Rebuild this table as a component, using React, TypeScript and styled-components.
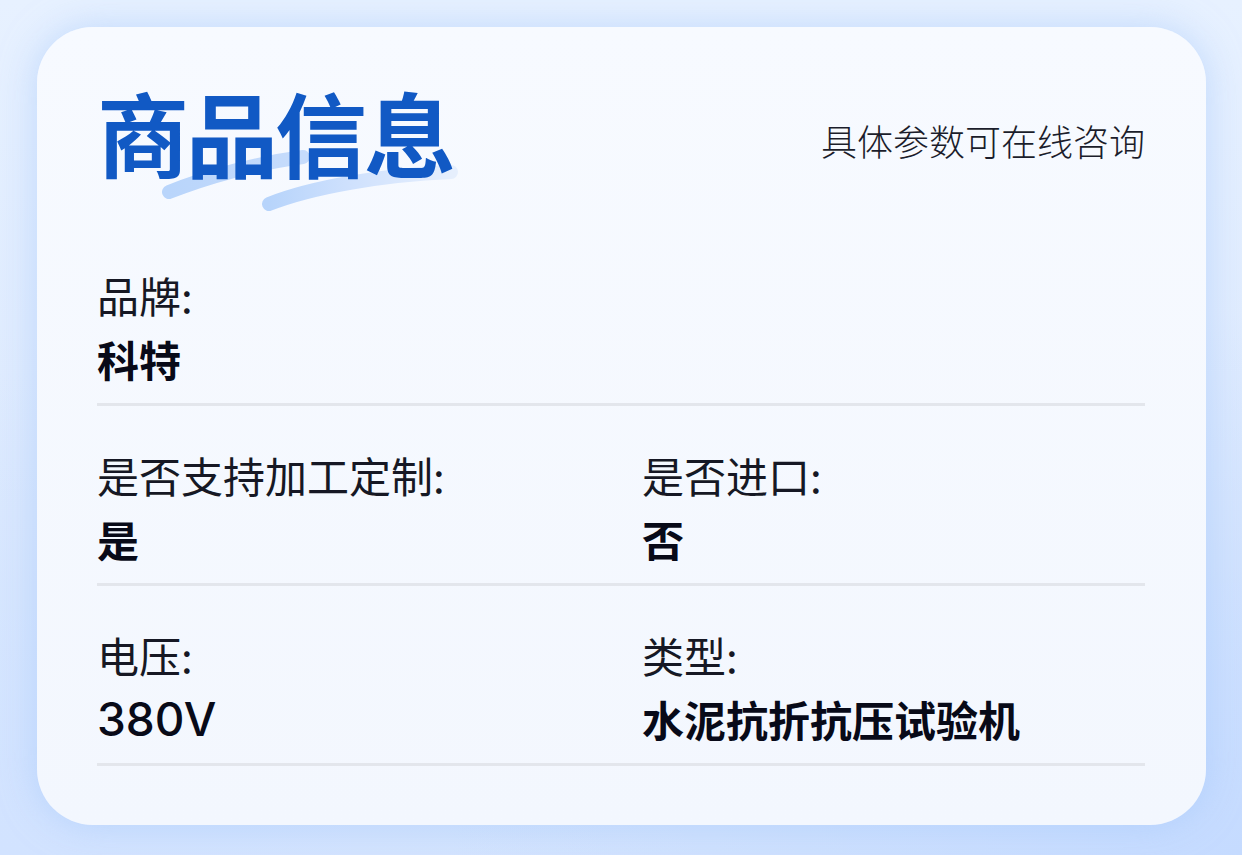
import React from "react";
import styled, { createGlobalStyle } from "styled-components";

const Global = createGlobalStyle`
  html, body { margin: 0; padding: 0; }
  body {
    font-family: "Noto Sans CJK SC", "Noto Sans", sans-serif;
    background: #dbe8fd;
  }
`;

const Page = styled.div`
  box-sizing: border-box;
  width: 1242px;
  height: 855px;
  padding: 27px 36px 30px 37px;
  background:
    radial-gradient(ellipse at 100% 100%, #c5dbff 0%, rgba(197, 219, 255, 0) 45%),
    radial-gradient(ellipse at 0% 100%, #d2e3ff 0%, rgba(210, 227, 255, 0) 40%),
    linear-gradient(180deg, #e7f1ff 0%, #dce9fe 60%, #d4e4fe 100%);
  overflow: hidden;
`;

const Card = styled.div`
  box-sizing: border-box;
  height: 798px;
  border-radius: 56px;
  background: linear-gradient(180deg, #f7faff 0%, #f3f7fe 100%);
  box-shadow: 0 0 36px rgba(160, 196, 250, 0.55);
  padding: 44px 61px 0 60px;
`;

const Header = styled.div`
  display: flex;
  align-items: center;
  justify-content: space-between;
  height: 150px;
  margin-bottom: 50px;
`;

const TitleWrap = styled.div`
  position: relative;
  align-self: flex-start;
`;

const Title = styled.h1`
  position: relative;
  margin: 0;
  font-size: 92px;
  line-height: 120px;
  font-weight: 700;
  color: #1159c4;
  letter-spacing: -3px;
  z-index: 1;
`;

const Brush = styled.svg`
  position: absolute;
  left: 0;
  top: 0;
  width: 400px;
  height: 160px;
  z-index: 0;
`;

const Subtitle = styled.div`
  font-size: 36px;
  font-weight: 300;
  color: #1b1d2b;
  margin-top: -13px;
`;

const Row = styled.div`
  display: grid;
  grid-template-columns: repeat(2, 1fr);
  column-gap: 42px;
  border-bottom: 3px solid #e3e6ec;
  padding-bottom: 20px;
  margin-bottom: 45px;
`;

const Item = styled.div`
  display: flex;
  flex-direction: column;
  gap: 16px;
`;

const Label = styled.div`
  font-size: 42px;
  line-height: 48px;
  font-weight: 400;
  color: #161824;
`;

const Value = styled.div<{ $latin?: boolean }>`
  font-family: ${(p) =>
    p.$latin ? `"Inter", "Noto Sans CJK SC", sans-serif` : `"Noto Sans CJK SC", sans-serif`};
  font-size: ${(p) => (p.$latin ? "46px" : "42px")};
  line-height: 48px;
  font-weight: ${(p) => (p.$latin ? 500 : 700)};
  color: #080a18;
`;

const rows: { label: string; value: string; latin?: boolean }[][] = [
  [{ label: "品牌:", value: "科特" }],
  [
    { label: "是否支持加工定制:", value: "是" },
    { label: "是否进口:", value: "否" },
  ],
  [
    { label: "电压:", value: "380V", latin: true },
    { label: "类型:", value: "水泥抗折抗压试验机" },
  ],
];

export default function App() {
  return (
    <>
      <Global />
      <Page>
        <Card>
          <Header>
            <TitleWrap>
              <Brush viewBox="0 0 400 160">
                <defs>
                  <linearGradient id="b1" x1="0" y1="0" x2="1" y2="0">
                    <stop offset="0" stopColor="#b9d5fb" />
                    <stop offset="1" stopColor="#c6dcfc" />
                  </linearGradient>
                  <linearGradient id="b2" x1="0" y1="0" x2="1" y2="0">
                    <stop offset="0" stopColor="#b7d4fb" />
                    <stop offset="0.45" stopColor="#cfe1fd" />
                    <stop offset="1" stopColor="#e6effd" />
                  </linearGradient>
                </defs>
                <path
                  d="M72 121 C 110 106, 160 92, 206 86"
                  stroke="url(#b1)"
                  strokeWidth="14"
                  strokeLinecap="round"
                  fill="none"
                />
                <path
                  d="M172 133 C 215 116, 285 104, 354 101"
                  stroke="url(#b2)"
                  strokeWidth="14"
                  strokeLinecap="round"
                  fill="none"
                />
              </Brush>
              <Title>商品信息</Title>
            </TitleWrap>
            <Subtitle>具体参数可在线咨询</Subtitle>
          </Header>
          {rows.map((r, i) => (
            <Row key={i}>
              {r.map((it) => (
                <Item key={it.label}>
                  <Label>{it.label}</Label>
                  <Value $latin={it.latin}>{it.value}</Value>
                </Item>
              ))}
            </Row>
          ))}
        </Card>
      </Page>
    </>
  );
}
